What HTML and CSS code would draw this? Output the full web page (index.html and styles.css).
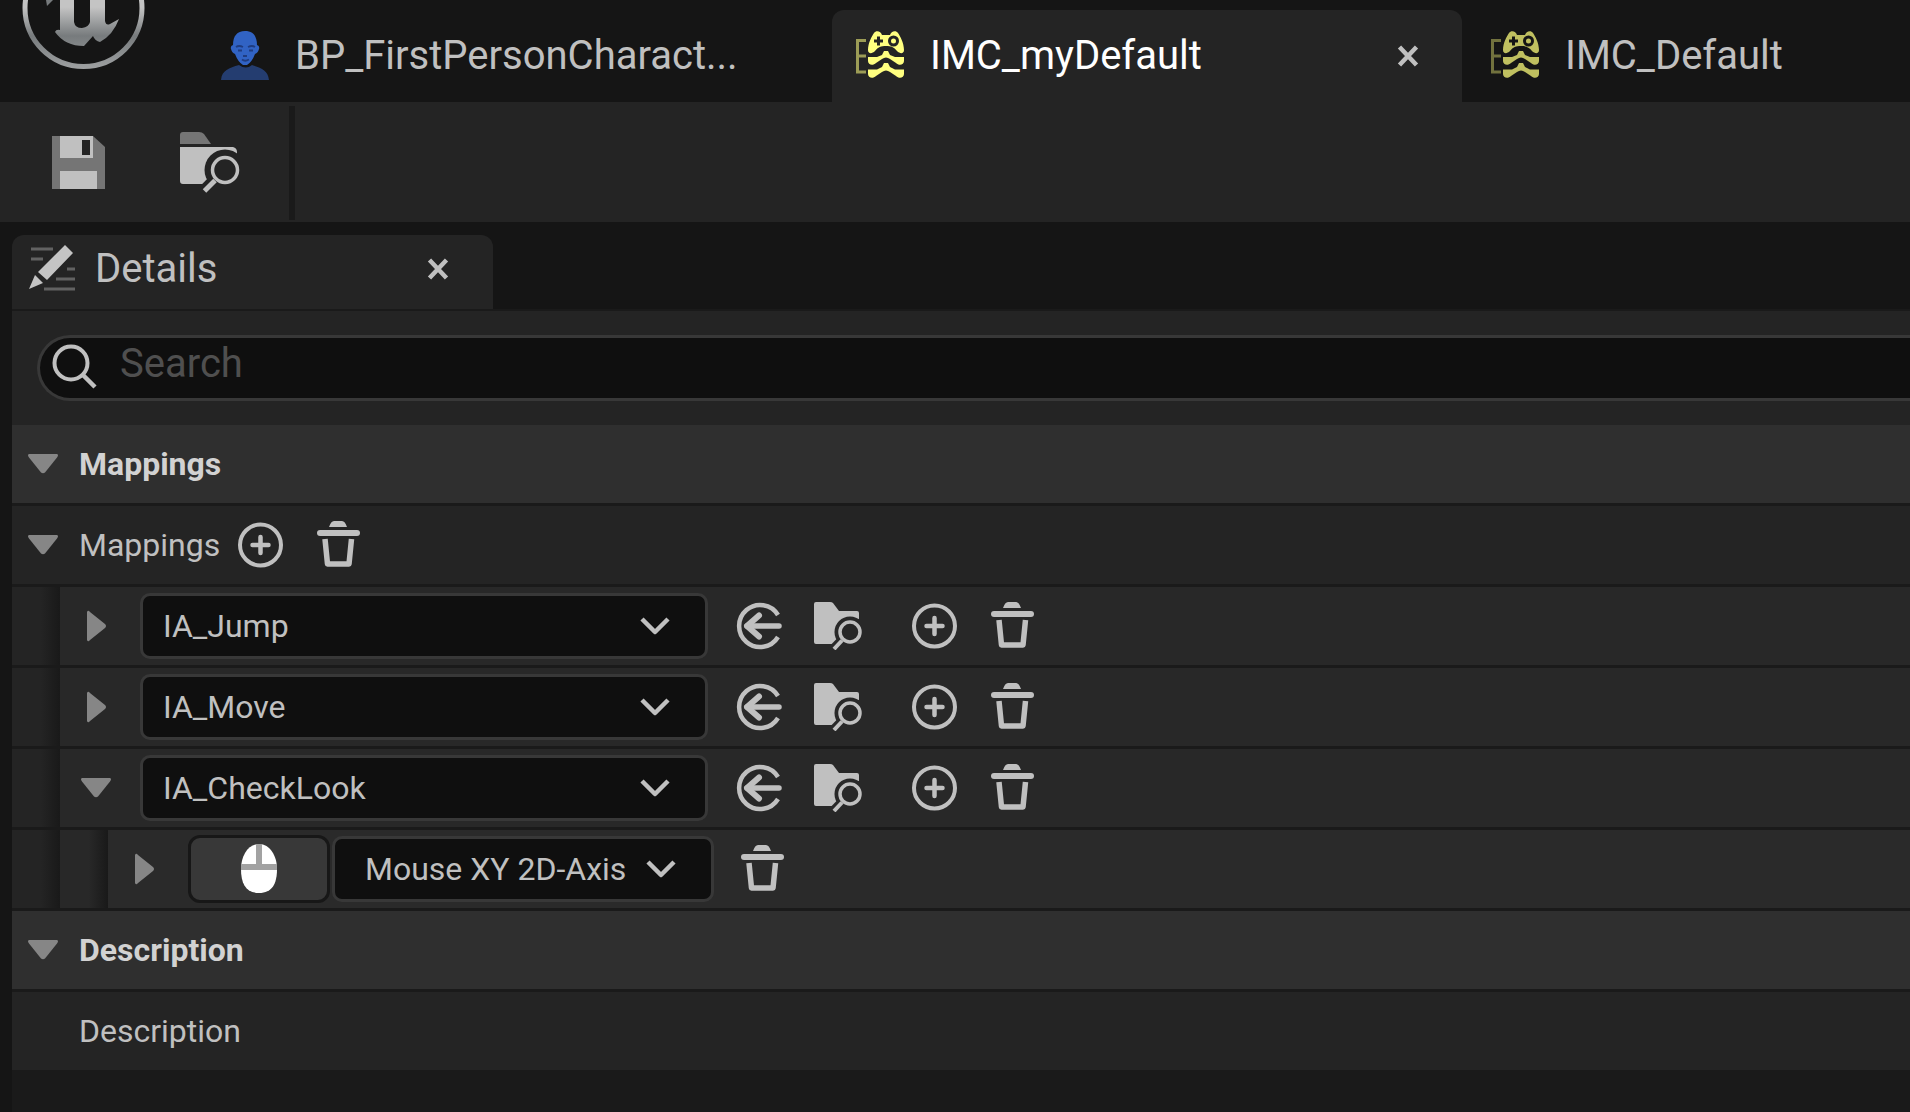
FILE: index.html
```
<!doctype html>
<html lang="en">

<head>
	<meta charset="UTF-8">
	<meta name="viewport" content="width=device-width, initial-scale=1.0">
	<title>IMC_myDefault</title>
	<link rel="stylesheet" href="styles.css">
</head>

<body>
	<!-- shared icons -->
	<svg class="icon-defs" aria-hidden="true">
		<symbol id="imc" viewBox="0 0 50 50">
			<path d="M10 9.500H1.500V41H10M1.500 25H10" fill="none" stroke="currentColor" stroke-width="3" opacity="0.55" />
			<path fill="currentColor" fill-rule="evenodd" d="M12 19C12 12 16 5 18 2C20-1 25 0 26 4H34C35 0 40-1 42 2C44 5 48 12 48 19C48 23 44 23 41 20C38 16 35 15 30 15C25 15 22 16 19 20C16 23 12 23 12 19ZM21 5.500V8.500H18V11.500H21V14.500H24V11.500H27V8.500H24V5.500ZM37.500 4.500A5.500 5.500 0 1 0 37.500 15.500A5.500 5.500 0 1 0 37.500 4.500ZM37.500 7.500A2.500 2.500 0 1 1 37.500 12.500A2.500 2.500 0 1 1 37.500 7.500Z" />
			<path fill="currentColor" d="M12 26H21L26 24L28 20H32L34 24L39 26H48V30C48 34 43 35 40 32L34 28Q30 25 26 28L20 32C17 35 12 34 12 30Z" />
			<path fill="currentColor" d="M12 38.500H21L26 36L28 32H32L34 36L39 38.500H48V43C48 47 43 48 40 45L34 41Q30 38 26 41L20 45C17 48 12 47 12 43Z" />
		</symbol>
		<symbol id="close" viewBox="0 0 24 24">
			<path d="M3.500 3L20.500 21M20.500 3L3.500 21" fill="none" stroke="currentColor" stroke-width="4.500" />
		</symbol>
		<symbol id="down" viewBox="0 0 32 32">
			<path d="M2 6H30Q32 7 30 9.500L18 24.500Q16 26 14 24.500L2 9.500Q0 7 2 6Z" fill="currentColor" />
		</symbol>
		<symbol id="right" viewBox="0 0 32 32">
			<path d="M7 2Q8-0.500 10 2L25 14Q27 16 25 18L10 30Q8 32.500 7 30Z" fill="currentColor" />
		</symbol>
		<symbol id="chevron" viewBox="0 0 32 32">
			<path d="M3 9L16 22L29 9" fill="none" stroke="currentColor" stroke-width="4.500" stroke-linejoin="round" />
		</symbol>
		<symbol id="plus" viewBox="0 0 48 48">
			<circle cx="24.500" cy="24" r="20.500" fill="none" stroke="currentColor" stroke-width="4" />
			<path d="M24.500 16V32M16.500 24H32.500" fill="none" stroke="currentColor" stroke-width="4.500" stroke-linecap="round" />
		</symbol>
		<symbol id="trash" viewBox="0 0 48 48">
			<path d="M15 6Q17 0 20 0H28Q31 0 33 6Z" fill="currentColor" />
			<path d="M6 12H43" fill="none" stroke="currentColor" stroke-width="6" stroke-linecap="round" />
			<path d="M11 18L13.500 43H35L37.500 18" fill="none" stroke="currentColor" stroke-width="5.500" stroke-linejoin="round" />
		</symbol>
		<symbol id="use-selected" viewBox="0 0 48 48">
			<path d="M42 13A21 21 0 1 0 42 35" fill="none" stroke="currentColor" stroke-width="4.500" />
			<path d="M43 24H11" fill="none" stroke="currentColor" stroke-width="5.500" stroke-linecap="round" />
			<path d="M23 13.500L11 24L23 34.500" fill="none" stroke="currentColor" stroke-width="6" stroke-linecap="round" stroke-linejoin="round" />
		</symbol>
		<symbol id="browse" viewBox="0 0 48 48">
			<mask id="browse-cut">
				<rect width="48" height="48" fill="#fff" />
				<circle cx="36" cy="30" r="15.500" fill="#000" />
				<path d="M28 38L16 50" stroke="#000" stroke-width="9" />
			</mask>
			<path d="M0 2Q0 0 2 0H16Q18 0 19 1L25 9H43Q45 9 45 11V17H30V42H2Q0 42 0 40Z" fill="currentColor" mask="url(#browse-cut)" />
			<circle cx="36" cy="30" r="10" fill="none" stroke="currentColor" stroke-width="3.500" />
			<path d="M28 38.500L20 47" stroke="currentColor" stroke-width="4" />
		</symbol>
	</svg>

	<header class="tab-bar">
		<svg class="logo" viewBox="0 0 126 72" aria-hidden="true">
			<linearGradient id="metal" x1="0" y1="0" x2="0" y2="72" gradientUnits="userSpaceOnUse">
				<stop offset="0.100" stop-color="#c4c4c4" />
				<stop offset="0.500" stop-color="#777b7d" />
				<stop offset="1" stop-color="#a2a4a5" />
			</linearGradient>
			<circle cx="63.500" cy="8" r="58.500" fill="none" stroke="url(#metal)" stroke-width="5" />
			<path d="M40 0H54V22Q55 28 62 28Q69 27 70 22V0H85V21Q86 26 90 24L99 19Q93 35 80 42Q75 41 73 36L64 46Q45 46 35 32Q36 29 40 30Z" fill="url(#metal)" />
			<path d="M26 0H33L27 6Z" fill="#777b7d" />
		</svg>
		<nav class="tabs">
			<a class="tab" href="#">
				<svg class="tab-icon" viewBox="0 0 50 50" aria-hidden="true">
					<path d="M0 49C1 39 8 37 18 34Q25 39 31 34C40 37 47 39 48 49Z" fill="#243d70" />
					<path d="M24 0C32 0 36 5 36 14Q39 15 38 18Q37 22 34 23Q31 31 26 34H22Q17 31 14 23Q11 22 10 18Q9 15 12 14C12 5 16 0 24 0Z" fill="#3163c4" />
					<path d="M15 16Q18 14 22 16M27 16Q31 14 34 16M17 19.500H21M28 19.500H32M22 25H26M21 28.500Q24 31 28 28.500" fill="none" stroke="#1f3c80" stroke-width="1.800" />
				</svg>
				<span>BP_FirstPersonCharact...</span>
			</a>
			<div class="tab active">
				<svg class="tab-icon" aria-hidden="true"><use href="#imc" /></svg>
				<span>IMC_myDefault</span>
				<button class="close" aria-label="Close IMC_myDefault"><svg><use href="#close" /></svg></button>
			</div>
			<a class="tab dimmed" href="#">
				<svg class="tab-icon" aria-hidden="true"><use href="#imc" /></svg>
				<span>IMC_Default</span>
			</a>
		</nav>
	</header>

	<div class="toolbar">
		<button class="tool" aria-label="Save">
			<svg viewBox="0 0 60 62">
				<path d="M0 4H41L53 15V57H0Z" fill="#757575" />
				<path d="M8 4H41V26H8ZM8 39H45V57H8Z" fill="#c0c0c0" />
				<path d="M30 8H38V23H30Z" fill="#242424" />
			</svg>
		</button>
		<button class="tool" aria-label="Browse to asset">
			<svg viewBox="0 0 60 62">
				<mask id="tool-cut">
					<rect width="60" height="62" fill="#fff" />
					<circle cx="45" cy="38" r="20.500" fill="#000" />
					<path d="M34 48L20 62" stroke="#000" stroke-width="11" />
				</mask>
				<path d="M0 3Q0 0 3 0H19Q22 0 24 2L31 12H0Z" fill="#757575" />
				<path d="M0 15H53Q57 16 57 20V24H40V52H3Q0 52 0 49Z" fill="#c0c0c0" mask="url(#tool-cut)" />
				<circle cx="45" cy="38" r="12.500" fill="none" stroke="#c0c0c0" stroke-width="3.500" />
				<path d="M35 48.500L24.500 59" stroke="#c0c0c0" stroke-width="5" />
			</svg>
		</button>
	</div>

	<main class="panel">
		<div class="panel-tab">
			<svg class="details-icon" viewBox="0 0 48 48" aria-hidden="true">
				<path d="M2 4H24M2 14H14M38 24H46M27 34H46M15 44H46" stroke="#626262" stroke-width="3" />
				<path d="M36 0L44 8L18 35L9 27ZM6 30L14 38L0 44Z" fill="#c4c4c4" />
			</svg>
			<h1>Details</h1>
			<button class="close" aria-label="Close Details"><svg><use href="#close" /></svg></button>
		</div>

		<div class="search-area">
			<label class="search">
				<svg viewBox="0 0 48 48" aria-hidden="true">
					<circle cx="19" cy="19" r="16.500" fill="none" stroke="currentColor" stroke-width="4" />
					<path d="M30 30L43 43" stroke="currentColor" stroke-width="4.500" />
				</svg>
				<input type="text" placeholder="Search" aria-label="Search">
			</label>
		</div>

		<section>
			<h2 class="row category">
				<svg class="arrow"><use href="#down" /></svg>
				<span>Mappings</span>
			</h2>
			<div class="row">
				<svg class="arrow"><use href="#down" /></svg>
				<span>Mappings</span>
				<div class="actions">
					<button aria-label="Add element"><svg><use href="#plus" /></svg></button>
					<button aria-label="Remove all elements"><svg><use href="#trash" /></svg></button>
				</div>
			</div>

			<div class="row child">
				<i class="indent"></i>
				<div class="cell">
					<svg class="arrow"><use href="#right" /></svg>
					<div class="dropdown asset">
						<select aria-label="Input action 1"><option>IA_Jump</option></select>
						<svg><use href="#chevron" /></svg>
					</div>
					<div class="actions">
						<button aria-label="Use selected asset"><svg><use href="#use-selected" /></svg></button>
						<button aria-label="Browse to asset"><svg><use href="#browse" /></svg></button>
					</div>
					<div class="actions edit">
						<button aria-label="Add mapping"><svg><use href="#plus" /></svg></button>
						<button aria-label="Remove mapping"><svg><use href="#trash" /></svg></button>
					</div>
				</div>
			</div>

			<div class="row child">
				<i class="indent"></i>
				<div class="cell">
					<svg class="arrow"><use href="#right" /></svg>
					<div class="dropdown asset">
						<select aria-label="Input action 2"><option>IA_Move</option></select>
						<svg><use href="#chevron" /></svg>
					</div>
					<div class="actions">
						<button aria-label="Use selected asset"><svg><use href="#use-selected" /></svg></button>
						<button aria-label="Browse to asset"><svg><use href="#browse" /></svg></button>
					</div>
					<div class="actions edit">
						<button aria-label="Add mapping"><svg><use href="#plus" /></svg></button>
						<button aria-label="Remove mapping"><svg><use href="#trash" /></svg></button>
					</div>
				</div>
			</div>

			<div class="row child">
				<i class="indent"></i>
				<div class="cell">
					<svg class="arrow"><use href="#down" /></svg>
					<div class="dropdown asset">
						<select aria-label="Input action 3"><option>IA_CheckLook</option></select>
						<svg><use href="#chevron" /></svg>
					</div>
					<div class="actions">
						<button aria-label="Use selected asset"><svg><use href="#use-selected" /></svg></button>
						<button aria-label="Browse to asset"><svg><use href="#browse" /></svg></button>
					</div>
					<div class="actions edit">
						<button aria-label="Add mapping"><svg><use href="#plus" /></svg></button>
						<button aria-label="Remove mapping"><svg><use href="#trash" /></svg></button>
					</div>
				</div>
			</div>

			<div class="row child grandchild">
				<i class="indent"></i>
				<i class="indent"></i>
				<div class="cell">
					<svg class="arrow"><use href="#right" /></svg>
					<button class="key-button" aria-label="Listen for key">
						<svg viewBox="0 0 36 50">
							<path d="M18 0C29 0 36 12 36 25C36 40 31 49 18 49C5 49 0 40 0 25C0 12 7 0 18 0Z" fill="#fff" />
							<path d="M15 0H21V20H36V26H0V20H15Z" fill="#a2a2a2" />
						</svg>
					</button>
					<div class="dropdown key">
						<select aria-label="Key"><option>Mouse XY 2D-Axis</option></select>
						<svg><use href="#chevron" /></svg>
					</div>
					<div class="actions">
						<button aria-label="Remove key"><svg><use href="#trash" /></svg></button>
					</div>
				</div>
			</div>
		</section>

		<section>
			<h2 class="row category">
				<svg class="arrow"><use href="#down" /></svg>
				<span>Description</span>
			</h2>
			<div class="row">
				<span class="no-arrow">Description</span>
			</div>
		</section>
	</main>
</body>

</html>
```
FILE: styles.css
```
:root {
	--bar: #151515;
	--panel: #242424;
	--header: #2f2f2f;
	--line: #1a1a1a;
	--field: #0f0f0f;
	--field-border: #383838;
	--text: #c0c0c0;
}

* {
	box-sizing: border-box;
	margin: 0;
	padding: 0;
}

body {
	background: var(--bar);
	color: var(--text);
	font-family: Roboto, "Liberation Sans", sans-serif;
	font-size: 32px;
	min-height: 100vh;
	display: flex;
	flex-direction: column;
}

button {
	background: none;
	border: 0;
	color: inherit;
	cursor: pointer;
}

svg {
	display: block;
	flex-shrink: 0;
}

.icon-defs {
	position: absolute;
	width: 0;
	height: 0;
}

/* Window tabs */
.tab-bar {
	display: flex;
	height: 102px;
}

.logo {
	width: 126px;
	height: 72px;
	margin: 0 51px 0 20px;
}

.tabs {
	flex: 1;
	min-width: 0;
	display: flex;
	align-items: flex-end;
	gap: 5px;
}

.tab {
	display: flex;
	align-items: center;
	flex: 0 0 630px;
	height: 92px;
	padding: 0 42px 0 24px;
	gap: 24px;
	color: var(--text);
	font-size: 40px;
	line-height: 48px;
	text-decoration: none;
	border-radius: 12px 12px 0 0;
}

/* the last tab takes what is left of the bar */
.tab:last-child {
	flex: 1 1 0;
	min-width: 0;
}

.tab.active {
	background: var(--panel);
	color: #fff;
}

.tab-icon {
	width: 50px;
	height: 50px;
}

.active .tab-icon {
	color: #ffff80;
}

.dimmed .tab-icon {
	color: #c0c060;
}

.close {
	margin-left: auto;
	color: var(--text);
}

.close svg {
	width: 24px;
	height: 24px;
}

/* Toolbar */
.toolbar {
	display: flex;
	align-items: center;
	gap: 68px;
	height: 120px;
	padding: 2px 0 0 52px;
	background: var(--panel);
}

.toolbar::after {
	content: "";
	width: 6px;
	height: 114px;
	margin-left: -19px;
	background: var(--line);
}

.tool svg {
	width: 60px;
	height: 62px;
}

/* Details panel */
.panel {
	flex: 1;
	margin: 13px 0 0 12px;
	background: linear-gradient(var(--bar) 74px, var(--line) 74px);
}

.panel-tab {
	display: flex;
	align-items: center;
	width: 481px;
	height: 74px;
	padding: 0 43px 6px 17px;
	gap: 18px;
	background: var(--panel);
	border-radius: 12px 12px 0 0;
}

.panel-tab h1 {
	font-size: 40px;
	font-weight: 400;
	line-height: 48px;
}

.details-icon {
	width: 48px;
	height: 48px;
}

.search-area {
	margin-top: 2px;
	padding: 24px 0 24px 25px;
	background: var(--panel);
}

.search {
	display: flex;
	align-items: center;
	height: 66px;
	padding-left: 12px;
	gap: 20px;
	background: var(--field);
	border: 3px solid var(--field-border);
	border-right: 0;
	border-radius: 33px 0 0 33px;
}

.search svg {
	width: 48px;
	height: 48px;
}

.search input {
	flex: 1;
	height: 60px;
	padding-bottom: 10px;
	background: none;
	border: 0;
	outline: 0;
	color: var(--text);
	font: inherit;
	font-size: 40px;
}

.search input::placeholder {
	color: #4f4f4f;
	opacity: 1;
}

/* Property rows */
.row {
	display: flex;
	align-items: center;
	height: 81px;
	padding-left: 15px;
	background: var(--panel);
	border-bottom: 3px solid var(--line);
	font-size: 32px;
	font-weight: 400;
	line-height: 40px;
}

.row.category {
	background: var(--header);
	color: #d2d2d2;
	font-weight: 700;
}

.row.child {
	align-items: stretch;
	padding-left: 0;
}

.arrow {
	width: 32px;
	height: 32px;
	margin-right: 20px;
	color: #868686;
}

.no-arrow {
	margin-left: 52px;
}

.indent {
	flex: 0 0 48px;
	background: linear-gradient(to right, var(--panel) 60%, #191919);
}

.indent + .indent {
	background: linear-gradient(to right, #282828 60%, #191919);
}

.cell {
	flex: 1;
	display: flex;
	align-items: center;
	padding-left: 20px;
	background: #282828;
}

.grandchild .cell {
	background: #2a2a2a;
}

.cell .arrow {
	margin-right: 28px;
}

.actions {
	display: flex;
	gap: 30px;
	margin-left: 16px;
}

.actions svg {
	width: 48px;
	height: 48px;
}

.cell .actions {
	margin-left: 28px;
}

.cell .actions.edit {
	margin-left: 48px;
}

.grandchild .cell .actions {
	margin-left: 24px;
}

.dropdown {
	position: relative;
}

.dropdown select {
	appearance: none;
	width: 100%;
	height: 66px;
	padding: 0 20px;
	background: var(--field);
	border: 3px solid var(--field-border);
	border-radius: 10px;
	color: var(--text);
	font: inherit;
}

.dropdown svg {
	position: absolute;
	top: 17px;
	right: 37px;
	width: 32px;
	height: 32px;
	pointer-events: none;
}

.dropdown.asset {
	width: 568px;
}

.dropdown.key {
	width: 382px;
}

.dropdown.key select {
	padding: 0 30px;
}

.key-button {
	display: grid;
	place-items: center;
	width: 142px;
	height: 68px;
	margin-right: 2px;
	background: #383838;
	border: 3px solid #171717;
	border-radius: 12px;
}

.key-button svg {
	width: 36px;
	height: 50px;
}
```
